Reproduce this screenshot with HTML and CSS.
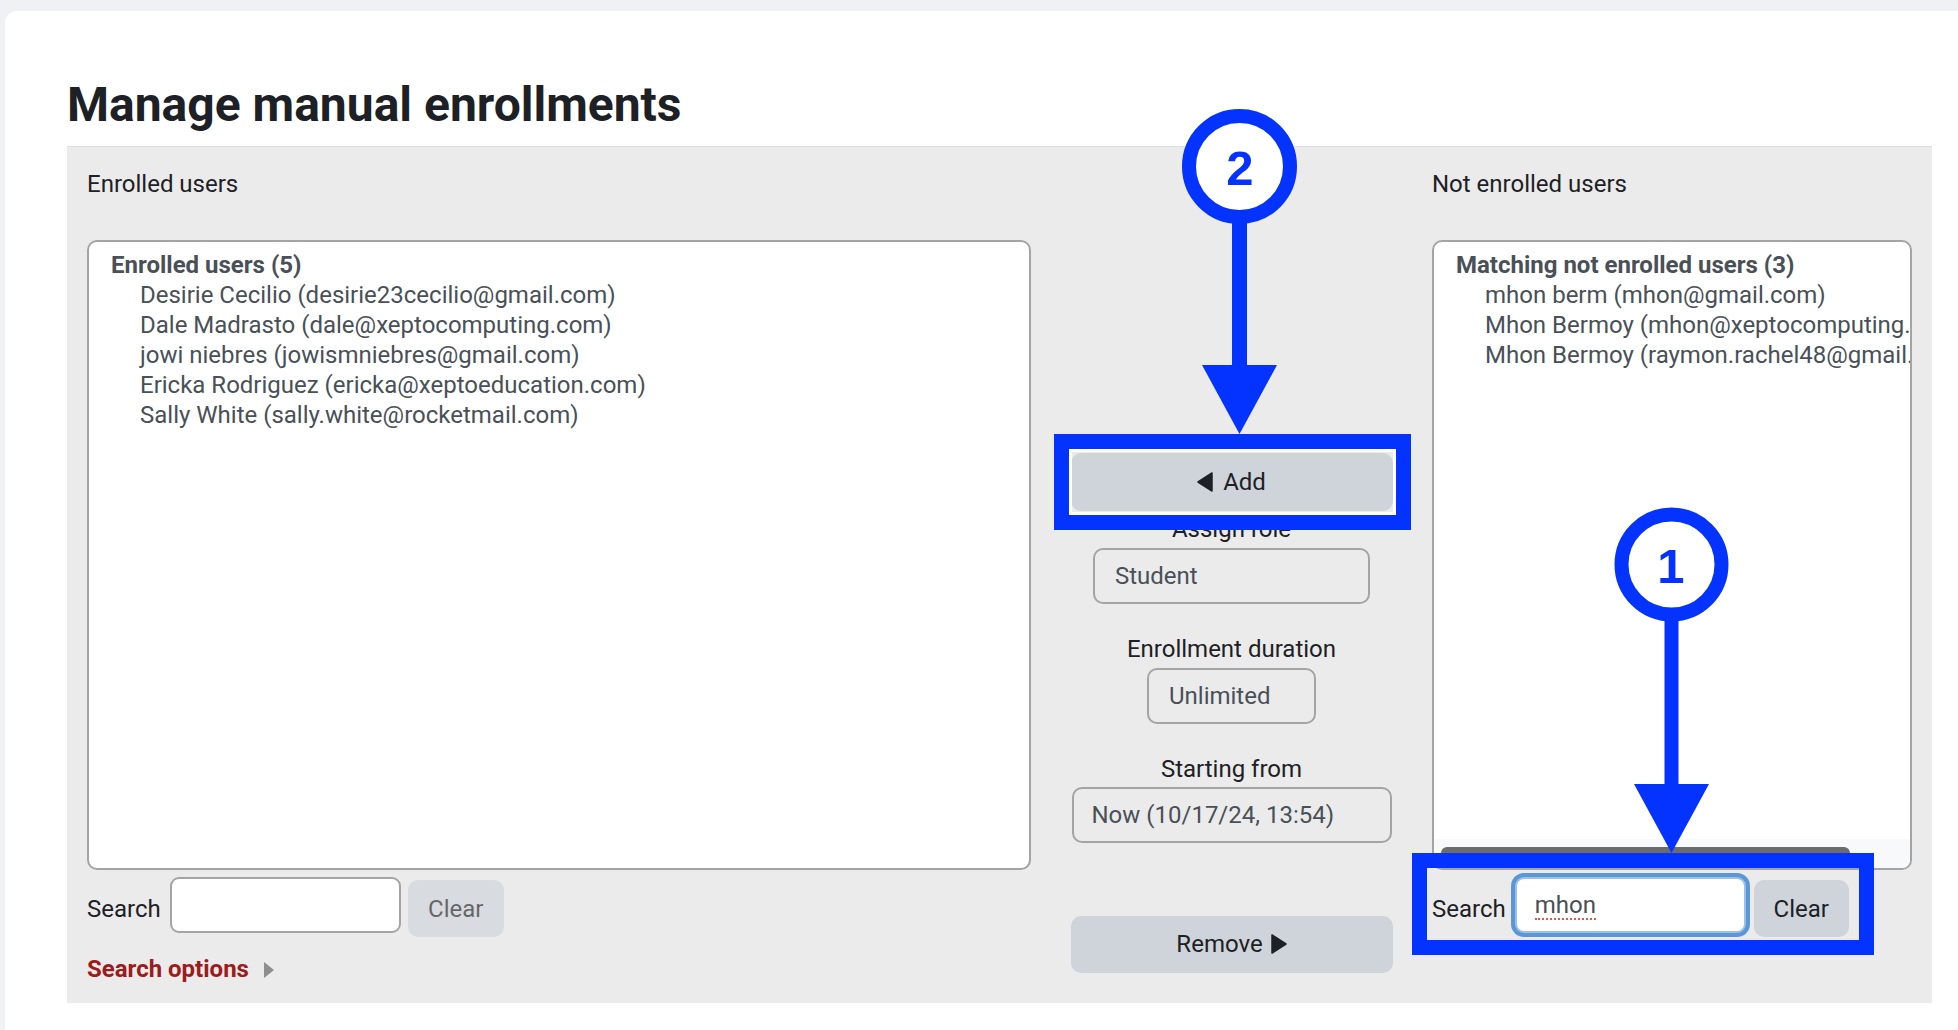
FILE: index.html
```html
<!DOCTYPE html>
<html lang="en">
<head>
<meta charset="utf-8">
<title>Manage manual enrollments</title>
<link rel="stylesheet" href="styles.css">
</head>
<body>
<div class="page">
  <main class="card">
    <h2 class="title">Manage manual enrollments</h2>
    <div class="selector">
      <div class="col col-existing">
        <div class="col-label">Enrolled users</div>
        <div class="listbox">
          <div class="list-items">
            <div class="optgroup">Enrolled users (5)</div>
            <div class="opt">Desirie Cecilio (desirie23cecilio@gmail.com)</div>
            <div class="opt">Dale Madrasto (dale@xeptocomputing.com)</div>
            <div class="opt">jowi niebres (jowismniebres@gmail.com)</div>
            <div class="opt">Ericka Rodriguez (ericka@xeptoeducation.com)</div>
            <div class="opt">Sally White (sally.white@rocketmail.com)</div>
          </div>
        </div>
        <div class="search-row">
          <span class="search-label">Search</span>
          <span class="search-input"></span>
          <span class="btn btn-clear is-disabled">Clear</span>
        </div>
        <div class="search-options">
          <span>Search options</span>
          <svg class="caret-right" width="10" height="16" viewBox="0 0 10 16"><path d="M0 0 L10 8 L0 16 Z" fill="#8e8e8e"/></svg>
        </div>
      </div>

      <div class="col col-buttons">
        <div class="btn btn-move">
          <svg class="tri" width="16" height="20" viewBox="0 0 16 20"><path d="M15 1 L15 19 L1 10 Z" fill="#1d2125" stroke="#1d2125" stroke-width="1.5" stroke-linejoin="round"/></svg>
          <span>Add</span>
        </div>
        <div class="field-label first">Assign role</div>
        <div class="select sel-role">Student</div>
        <div class="field-label">Enrollment duration</div>
        <div class="select sel-duration">Unlimited</div>
        <div class="field-label">Starting from</div>
        <div class="select sel-start">Now (10/17/24, 13:54)</div>
        <div class="btn btn-move btn-remove">
          <span>Remove</span>
          <svg class="tri" width="16" height="20" viewBox="0 0 16 20"><path d="M1 1 L1 19 L15 10 Z" fill="#1d2125" stroke="#1d2125" stroke-width="1.5" stroke-linejoin="round"/></svg>
        </div>
      </div>

      <div class="col col-potential">
        <div class="col-label">Not enrolled users</div>
        <div class="listbox listbox-scroll">
          <div class="list-items">
            <div class="optgroup">Matching not enrolled users (3)</div>
            <div class="opt">mhon berm (mhon@gmail.com)</div>
            <div class="opt">Mhon Bermoy (mhon@xeptocomputing.com)</div>
            <div class="opt">Mhon Bermoy (raymon.rachel48@gmail.com)</div>
          </div>
          <div class="hscroll"><div class="hscroll-thumb"></div></div>
        </div>
        <div class="search-row">
          <span class="search-label">Search</span>
          <span class="search-input is-focused"><span class="typed">mhon</span></span>
          <span class="btn btn-clear">Clear</span>
        </div>
      </div>
    </div>
  </main>

  <svg class="annotations" width="1958" height="1030" viewBox="0 0 1958 1030">
    <!-- step 2 -->
    <rect x="1232" y="220" width="15" height="148" fill="#0433ff"/>
    <polygon points="1202,365 1277,365 1239.5,434" fill="#0433ff"/>
    <circle cx="1239.5" cy="166.5" r="50.5" fill="#fff" stroke="#0433ff" stroke-width="14"/>
    <text x="1240" y="185" class="step-num">2</text>
    <rect x="1070.5" y="450.5" width="324" height="63" fill="none" stroke="#fff" stroke-width="3"/>
    <rect x="1061.5" y="441.5" width="342" height="81" fill="none" stroke="#0433ff" stroke-width="15"/>
    <!-- step 1 -->
    <rect x="1664.5" y="615" width="14" height="172" fill="#0433ff"/>
    <polygon points="1634,784 1709,784 1671.5,853" fill="#0433ff"/>
    <circle cx="1671.5" cy="564.5" r="50" fill="#fff" stroke="#0433ff" stroke-width="14"/>
    <text x="1671" y="583" class="step-num">1</text>
    <rect x="1419.5" y="860.5" width="447" height="87" fill="none" stroke="#0433ff" stroke-width="15"/>
  </svg>
</div>
</body>
</html>
```

FILE: styles.css
```css
html, body {
  margin: 0;
  padding: 0;
}

body {
  background: #eff1f5;
  font-family: Roboto, "Liberation Sans", Arial, sans-serif;
  color: #1d2125;
}

.page {
  position: relative;
  width: 1958px;
  height: 1030px;
  overflow: hidden;
}

.card {
  display: block;
  box-sizing: border-box;
  height: 1019px;
  margin: 11px 0 0 5px;
  padding: 65px 26px 0 62px;
  background: #fff;
  border-top-left-radius: 12px;
}

.title {
  margin: 0 0 12px;
  font-size: 48px;
  line-height: 57.6px;
  font-weight: 700;
  color: #1d2125;
}

.selector {
  display: grid;
  grid-template-columns: 944px 322px 480px;
  column-gap: 39.5px;
  padding: 22px 20px 19px 20px;
  background: #ebebeb;
  border-top: 1px solid #dfdfdf;
}

.col {
  display: flex;
  flex-direction: column;
  min-width: 0;
}

.col-label {
  font-size: 24px;
  line-height: 30px;
  color: #1d2125;
  margin-bottom: 41px;
}

.listbox {
  box-sizing: border-box;
  height: 630px;
  display: flex;
  flex-direction: column;
  border: 2px solid #a4a4a4;
  border-radius: 10px;
  background: #fff;
  overflow: hidden;
}

.list-items {
  flex: 1;
  padding: 8px 0 0 22px;
  font-size: 24px;
  line-height: 30px;
  color: #495057;
  white-space: nowrap;
  overflow: hidden;
}

.optgroup {
  font-weight: 700;
}

.opt {
  padding-left: 29px;
}

.hscroll {
  height: 29px;
  background: #f8f9fa;
  padding: 8px 0 0 7px;
  box-sizing: border-box;
}

.hscroll-thumb {
  width: 409px;
  height: 12px;
  border-radius: 6px;
  background: #6c6c6c;
}

.search-row {
  display: flex;
  align-items: flex-start;
  margin-top: 7px;
}

.search-label {
  margin-top: 17px;
  margin-right: 9px;
  font-size: 24px;
  line-height: 30px;
  color: #1d2125;
}

.search-input {
  box-sizing: border-box;
  width: 231px;
  height: 56px;
  padding: 11px 18px 0;
  border: 2px solid #a4a4a4;
  border-radius: 9px;
  background: #fff;
  font-size: 24px;
  line-height: 30px;
  color: #495057;
}

.search-input.is-focused {
  border-color: #9cc0ea;
  box-shadow: 0 0 0 4px #5b97d6;
}

.typed {
  display: inline-block;
  line-height: 26px;
  border-bottom: 2px dotted #f0514c;
}

.btn {
  box-sizing: border-box;
  border-radius: 10px;
  background: #ced4da;
  color: #1d2125;
  font-size: 24px;
  line-height: 30px;
  text-align: center;
}

.btn-clear {
  width: 96px;
  height: 57px;
  margin: 3px 0 0 7px;
  padding-top: 14px;
}

.col-potential .btn-clear {
  width: 95px;
  margin-left: 8px;
}

.btn-clear.is-disabled {
  opacity: 0.65;
}

.search-options {
  display: flex;
  align-items: center;
  gap: 15px;
  margin-top: 17px;
  font-size: 24px;
  line-height: 30px;
  font-weight: 700;
  color: #9d1b1b;
}

.caret-right {
  display: block;
  margin-top: 2px;
}

.col-buttons {
  align-items: center;
  padding-top: 284px;
}

.btn-move {
  display: flex;
  justify-content: center;
  align-items: center;
  gap: 10px;
  width: 100%;
  height: 58px;
}

.btn-remove {
  height: 57px;
  margin-top: 73px;
  gap: 8px;
}

.tri {
  display: block;
}

.field-label {
  margin-top: 30px;
  font-size: 24px;
  line-height: 30px;
  color: #1d2125;
  text-align: center;
}

.field-label.first {
  margin-top: 3px;
}

.select {
  box-sizing: border-box;
  height: 56px;
  margin-top: 4px;
  padding: 11px 20px;
  border: 2px solid #a4a4a4;
  border-radius: 10px;
  font-size: 24px;
  line-height: 30px;
  color: #495057;
  white-space: nowrap;
}

.sel-role {
  width: 277px;
}

.sel-duration {
  width: 169px;
}

.sel-start {
  width: 320px;
  margin-top: 3px;
  padding-left: 18px;
}

.annotations {
  position: absolute;
  top: 0;
  left: 0;
  pointer-events: none;
}

.step-num {
  font-family: "Liberation Sans", Arial, sans-serif;
  font-weight: 700;
  font-size: 49px;
  fill: #0433ff;
  text-anchor: middle;
}
```
